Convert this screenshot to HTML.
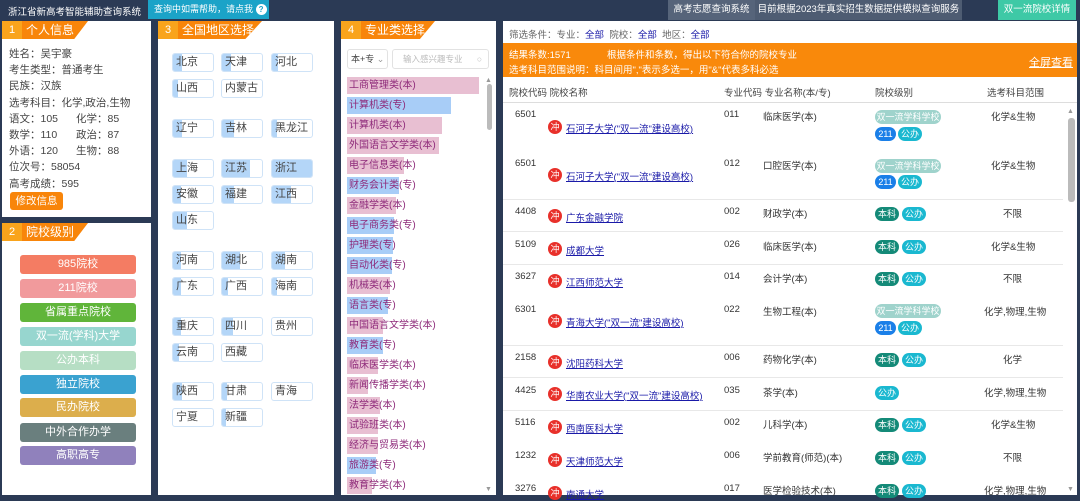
<!DOCTYPE html>
<html><head><meta charset="utf-8">
<style>
*{margin:0;padding:0;box-sizing:border-box}
body{width:1080px;height:495px;overflow:hidden;background:#2b3a55;font-family:"Liberation Sans","Noto Sans CJK SC",sans-serif;font-size:11px;color:#333;position:relative}
.a{position:absolute;white-space:nowrap}
.panel{position:absolute;background:#fff}
.tab{position:absolute;left:0;top:0;height:18px;width:86px;background:#f8850a;clip-path:polygon(0 0,100% 0,84% 100%,0 100%);color:#fff;font-size:12px;line-height:18px;padding-left:24px;white-space:nowrap}
.tab b{position:absolute;left:0;top:0;width:20px;height:18px;background:#f9a41c;font-weight:normal;text-align:center;font-size:11px}
.rg{position:absolute;width:42px;height:19px;border:1px solid #cfe3f7;border-radius:3px;background:#fff;font-size:11px;line-height:17px;color:#444;padding-left:3px;overflow:hidden;white-space:nowrap}
.rg i{position:absolute;left:0;top:0;bottom:0;background:#b4d6f8;z-index:0}
.rg span{position:relative}
.btn{position:absolute;left:18px;width:116px;height:19px;border-radius:3px;color:#fff;text-align:center;font-size:11px;line-height:19px}
.mj{position:absolute;left:347px;height:17px;font-size:10px;line-height:17px;color:#8e2a7a;padding-left:2px;white-space:nowrap}
.p{background:#e8bfd2}.b{background:#a8cdf7}
.t{position:absolute;height:14px;border-radius:7px;color:#fff;font-size:9px;line-height:14px;text-align:center;white-space:nowrap;overflow:hidden}
.c{position:absolute;left:548px;width:14px;height:14px;border-radius:7px;background:#e8302a;color:#fff;font-size:9px;line-height:14px;text-align:center}
.lk{position:absolute;left:566px;color:#1a1aa8;text-decoration:underline;font-size:9.5px;white-space:nowrap}
.sep{position:absolute;left:503px;width:560px;height:1px;background:#e8e8e8}
.r{font-size:9.5px}
</style></head><body>
<div class="a" style="left:8px;top:4px;color:#fff;font-size:9.5px">浙江省新高考智能辅助查询系统</div>
<div class="a" style="left:148px;top:0;width:121px;height:19px;background:#1ba3c8;color:#fff;font-size:9px;line-height:19px;padding-left:6px">查询中如需帮助，请点我 <span style="display:inline-block;width:11px;height:11px;border-radius:6px;background:#fff;color:#1ba3c8;font-size:8px;line-height:11px;text-align:center;font-weight:bold">?</span></div>
<div class="a" style="left:668px;top:0;width:87px;height:20px;background:#56647a;color:#fff;font-size:9.5px;line-height:20px;text-align:center">高考志愿查询系统</div>
<div class="a" style="left:755px;top:0;width:207px;height:20px;background:#4e5c72;color:#fff;font-size:9.5px;line-height:20px;text-align:center">目前根据2023年真实招生数据提供模拟查询服务</div>
<div class="a" style="left:998px;top:0;width:78px;height:20px;background:#3ec9a6;color:#fff;font-size:9.5px;line-height:20px;text-align:center">双一流院校详情</div>

<div class="panel" style="left:2px;top:21px;width:149px;height:196px">
<div class="tab"><b>1</b>个人信息</div>
<div style="position:absolute;left:7px;top:25px;font-size:10.5px;line-height:16.2px;color:#444">
姓名：吴宇豪<br>考生类型：普通考生<br>民族：汉族<br>选考科目：化学,政治,生物<br>
语文：105<span style="position:absolute;left:67px">化学：85</span><br>
数学：110<span style="position:absolute;left:67px">政治：87</span><br>
外语：120<span style="position:absolute;left:67px">生物：88</span><br>
位次号：58054<br>高考成绩：595</div>
<div class="a" style="left:8px;top:171px;width:53px;height:18px;background:#f8850a;border-radius:3px;color:#fff;font-size:10.5px;line-height:18px;text-align:center">修改信息</div>
</div>
<div class="panel" style="left:2px;top:223px;width:149px;height:272px">
<div class="tab"><b>2</b>院校级别</div>
<div class="btn" style="top:32px;background:#f47c63">985院校</div>
<div class="btn" style="top:56px;background:#f19a9c">211院校</div>
<div class="btn" style="top:80px;background:#60b53a">省属重点院校</div>
<div class="btn" style="top:104px;background:#97d6cf">双一流(学科)大学</div>
<div class="btn" style="top:128px;background:#b6dec4">公办本科</div>
<div class="btn" style="top:152px;background:#3aa2d0">独立院校</div>
<div class="btn" style="top:175px;background:#dcae4c">民办院校</div>
<div class="btn" style="top:200px;background:#6a7f7e">中外合作办学</div>
<div class="btn" style="top:223px;background:#9081bc">高职高专</div>
</div>

<div class="panel" style="left:158px;top:21px;width:176px;height:474px">
<div class="tab" style="width:104px"><b>3</b>全国地区选择</div>
</div>
<div class="rg" style="left:172px;top:53px"><i style="width:9px"></i><span>北京</span></div>
<div class="rg" style="left:221px;top:53px"><i style="width:9px"></i><span>天津</span></div>
<div class="rg" style="left:271px;top:53px"><i style="width:6px"></i><span>河北</span></div>
<div class="rg" style="left:172px;top:79px"><i style="width:5px"></i><span>山西</span></div>
<div class="rg" style="left:221px;top:79px"><span>内蒙古</span></div>
<div class="rg" style="left:172px;top:119px"><i style="width:9px"></i><span>辽宁</span></div>
<div class="rg" style="left:221px;top:119px"><i style="width:12px"></i><span>吉林</span></div>
<div class="rg" style="left:271px;top:119px"><i style="width:5px"></i><span>黑龙江</span></div>
<div class="rg" style="left:172px;top:159px"><i style="width:14px"></i><span>上海</span></div>
<div class="rg" style="left:221px;top:159px"><i style="width:28px"></i><span>江苏</span></div>
<div class="rg" style="left:271px;top:159px"><i style="width:42px"></i><span>浙江</span></div>
<div class="rg" style="left:172px;top:185px"><i style="width:8px"></i><span>安徽</span></div>
<div class="rg" style="left:221px;top:185px"><i style="width:12px"></i><span>福建</span></div>
<div class="rg" style="left:271px;top:185px"><i style="width:19px"></i><span>江西</span></div>
<div class="rg" style="left:172px;top:211px"><i style="width:14px"></i><span>山东</span></div>
<div class="rg" style="left:172px;top:251px"><i style="width:8px"></i><span>河南</span></div>
<div class="rg" style="left:221px;top:251px"><i style="width:18px"></i><span>湖北</span></div>
<div class="rg" style="left:271px;top:251px"><i style="width:13px"></i><span>湖南</span></div>
<div class="rg" style="left:172px;top:277px"><i style="width:8px"></i><span>广东</span></div>
<div class="rg" style="left:221px;top:277px"><i style="width:6px"></i><span>广西</span></div>
<div class="rg" style="left:271px;top:277px"><i style="width:5px"></i><span>海南</span></div>
<div class="rg" style="left:172px;top:317px"><i style="width:8px"></i><span>重庆</span></div>
<div class="rg" style="left:221px;top:317px"><i style="width:11px"></i><span>四川</span></div>
<div class="rg" style="left:271px;top:317px"><span>贵州</span></div>
<div class="rg" style="left:172px;top:343px"><i style="width:6px"></i><span>云南</span></div>
<div class="rg" style="left:221px;top:343px"><span>西藏</span></div>
<div class="rg" style="left:172px;top:382px"><i style="width:9px"></i><span>陕西</span></div>
<div class="rg" style="left:221px;top:382px"><i style="width:5px"></i><span>甘肃</span></div>
<div class="rg" style="left:271px;top:382px"><span>青海</span></div>
<div class="rg" style="left:172px;top:408px"><span>宁夏</span></div>
<div class="rg" style="left:221px;top:408px"><i style="width:4px"></i><span>新疆</span></div>

<div class="panel" style="left:341px;top:21px;width:155px;height:474px">
<div class="tab" style="width:94px"><b>4</b>专业类选择</div>
</div>
<div class="a" style="left:347px;top:49px;width:41px;height:20px;border:1px solid #e2e2e2;border-radius:3px;background:#fff;font-size:9px;line-height:18px;padding-left:3px;color:#444">本+专 <span style="color:#999">⌄</span></div>
<div class="a" style="left:392px;top:49px;width:97px;height:20px;border:1px solid #e2e2e2;border-radius:3px;background:#fff;font-size:8.5px;line-height:18px;padding-left:10px;color:#bbb">输入感兴趣专业 <span style="position:absolute;right:6px">○</span></div>
<div class="mj p" style="top:77px;width:132px">工商管理类(本)</div>
<div class="mj b" style="top:97px;width:104px">计算机类(专)</div>
<div class="mj p" style="top:117px;width:95px">计算机类(本)</div>
<div class="mj p" style="top:137px;width:92px">外国语言文学类(本)</div>
<div class="mj p" style="top:157px;width:57px">电子信息类(本)</div>
<div class="mj b" style="top:177px;width:52px">财务会计类(专)</div>
<div class="mj p" style="top:197px;width:49px">金融学类(本)</div>
<div class="mj b" style="top:217px;width:47px">电子商务类(专)</div>
<div class="mj b" style="top:237px;width:46px">护理类(专)</div>
<div class="mj b" style="top:257px;width:45px">自动化类(专)</div>
<div class="mj p" style="top:277px;width:43px">机械类(本)</div>
<div class="mj b" style="top:297px;width:41px">语言类(专)</div>
<div class="mj p" style="top:317px;width:36px">中国语言文学类(本)</div>
<div class="mj b" style="top:337px;width:36px">教育类(专)</div>
<div class="mj p" style="top:357px;width:31px">临床医学类(本)</div>
<div class="mj p" style="top:377px;width:21px">新闻传播学类(本)</div>
<div class="mj p" style="top:397px;width:33px">法学类(本)</div>
<div class="mj p" style="top:417px;width:31px">试验班类(本)</div>
<div class="mj p" style="top:437px;width:31px">经济与贸易类(本)</div>
<div class="mj b" style="top:457px;width:29px">旅游类(专)</div>
<div class="mj p" style="top:477px;width:25px">教育学类(本)</div>
<div class="a" style="left:487px;top:84px;width:5px;height:46px;background:#bbb;border-radius:3px"></div>
<div class="a" style="left:485px;top:77px;font-size:7px;color:#999">▲</div>
<div class="a" style="left:485px;top:486px;font-size:7px;color:#999">▼</div>

<div class="panel" style="left:503px;top:21px;width:574px;height:474px"></div>
<div class="a" style="left:509px;top:27px;font-size:9.5px;color:#666">筛选条件：专业：<span style="color:#1a1aa8">全部</span>&nbsp; 院校：<span style="color:#1a1aa8">全部</span>&nbsp; 地区：<span style="color:#1a1aa8">全部</span></div>
<div class="a" style="left:503px;top:43px;width:574px;height:34px;background:#f9890b"></div>
<div class="a" style="left:509px;top:47px;color:#fff;font-size:9.5px">结果条数:1571</div>
<div class="a" style="left:607px;top:47px;color:#fff;font-size:9.5px">根据条件和条数，得出以下符合你的院校专业</div>
<div class="a" style="left:509px;top:62px;color:#fff;font-size:9.5px">选考科目范围说明：科目间用","表示多选一，用"&amp;"代表多科必选</div>
<div class="a" style="left:1029px;top:54px;color:#fff;font-size:11px;text-decoration:underline">全屏查看</div>
<div class="a" style="left:509px;top:85px;font-size:9.5px;color:#444">院校代码 院校名称</div>
<div class="a" style="left:724px;top:85px;font-size:9.5px;color:#444">专业代码 专业名称(本/专)</div>
<div class="a" style="left:875px;top:85px;font-size:9.5px;color:#444">院校级别</div>
<div class="a" style="left:987px;top:85px;font-size:9.5px;color:#444">选考科目范围</div>
<div class="a" style="left:503px;top:102px;width:574px;height:1px;background:#ddd"></div>
<div class="a" style="left:1068px;top:118px;width:7px;height:84px;background:#bbb;border-radius:3px"></div>
<div class="a" style="left:1067px;top:108px;font-size:7px;color:#999">▲</div>
<div class="a" style="left:1067px;top:486px;font-size:7px;color:#999">▼</div>

<div class="a r" style="left:515px;top:109px">6501</div><div class="c" style="top:120px">冲</div><div class="lk" style="top:121px">石河子大学("双一流"建设高校)</div>
<div class="a r" style="left:724px;top:109px">011</div><div class="a r" style="left:763px;top:109px">临床医学(本)</div>
<div class="t" style="left:875px;top:110px;width:66px;background:#9fd3cc">双一流学科学校</div><div class="t" style="left:875px;top:127px;width:21px;background:#1a7fe8">211</div><div class="t" style="left:898px;top:127px;width:24px;background:#1ab8d0">公办</div>
<div class="a r" style="left:991px;top:109px">化学&amp;生物</div>

<div class="a r" style="left:515px;top:158px">6501</div><div class="c" style="top:168px">冲</div><div class="lk" style="top:169px">石河子大学("双一流"建设高校)</div>
<div class="a r" style="left:724px;top:158px">012</div><div class="a r" style="left:763px;top:158px">口腔医学(本)</div>
<div class="t" style="left:875px;top:159px;width:66px;background:#9fd3cc">双一流学科学校</div><div class="t" style="left:875px;top:175px;width:21px;background:#1a7fe8">211</div><div class="t" style="left:898px;top:175px;width:24px;background:#1ab8d0">公办</div>
<div class="a r" style="left:991px;top:158px">化学&amp;生物</div>
<div class="sep" style="top:199px"></div>

<div class="a r" style="left:515px;top:206px">4408</div><div class="c" style="top:209px">冲</div><div class="lk" style="top:210px">广东金融学院</div>
<div class="a r" style="left:724px;top:206px">002</div><div class="a r" style="left:763px;top:206px">财政学(本)</div>
<div class="t" style="left:875px;top:207px;width:24px;background:#148a78">本科</div><div class="t" style="left:902px;top:207px;width:24px;background:#1ab8d0">公办</div>
<div class="a r" style="left:1003px;top:206px">不限</div>
<div class="sep" style="top:231px"></div>

<div class="a r" style="left:515px;top:239px">5109</div><div class="c" style="top:242px">冲</div><div class="lk" style="top:243px">成都大学</div>
<div class="a r" style="left:724px;top:239px">026</div><div class="a r" style="left:763px;top:239px">临床医学(本)</div>
<div class="t" style="left:875px;top:240px;width:24px;background:#148a78">本科</div><div class="t" style="left:902px;top:240px;width:24px;background:#1ab8d0">公办</div>
<div class="a r" style="left:991px;top:239px">化学&amp;生物</div>
<div class="sep" style="top:264px"></div>

<div class="a r" style="left:515px;top:271px">3627</div><div class="c" style="top:274px">冲</div><div class="lk" style="top:275px">江西师范大学</div>
<div class="a r" style="left:724px;top:271px">014</div><div class="a r" style="left:763px;top:271px">会计学(本)</div>
<div class="t" style="left:875px;top:272px;width:24px;background:#148a78">本科</div><div class="t" style="left:902px;top:272px;width:24px;background:#1ab8d0">公办</div>
<div class="a r" style="left:1003px;top:271px">不限</div>

<div class="a r" style="left:515px;top:304px">6301</div><div class="c" style="top:314px">冲</div><div class="lk" style="top:315px">青海大学("双一流"建设高校)</div>
<div class="a r" style="left:724px;top:304px">022</div><div class="a r" style="left:763px;top:304px">生物工程(本)</div>
<div class="t" style="left:875px;top:304px;width:66px;background:#9fd3cc">双一流学科学校</div><div class="t" style="left:875px;top:321px;width:21px;background:#1a7fe8">211</div><div class="t" style="left:898px;top:321px;width:24px;background:#1ab8d0">公办</div>
<div class="a r" style="left:984px;top:304px">化学,物理,生物</div>
<div class="sep" style="top:345px"></div>

<div class="a r" style="left:515px;top:352px">2158</div><div class="c" style="top:355px">冲</div><div class="lk" style="top:356px">沈阳药科大学</div>
<div class="a r" style="left:724px;top:352px">006</div><div class="a r" style="left:763px;top:352px">药物化学(本)</div>
<div class="t" style="left:875px;top:353px;width:24px;background:#148a78">本科</div><div class="t" style="left:902px;top:353px;width:24px;background:#1ab8d0">公办</div>
<div class="a r" style="left:1003px;top:352px">化学</div>
<div class="sep" style="top:377px"></div>

<div class="a r" style="left:515px;top:385px">4425</div><div class="c" style="top:387px">冲</div><div class="lk" style="top:388px">华南农业大学("双一流"建设高校)</div>
<div class="a r" style="left:724px;top:385px">035</div><div class="a r" style="left:763px;top:385px">茶学(本)</div>
<div class="t" style="left:875px;top:386px;width:24px;background:#1ab8d0">公办</div>
<div class="a r" style="left:984px;top:385px">化学,物理,生物</div>
<div class="sep" style="top:410px"></div>

<div class="a r" style="left:515px;top:417px">5116</div><div class="c" style="top:420px">冲</div><div class="lk" style="top:421px">西南医科大学</div>
<div class="a r" style="left:724px;top:417px">002</div><div class="a r" style="left:763px;top:417px">儿科学(本)</div>
<div class="t" style="left:875px;top:418px;width:24px;background:#148a78">本科</div><div class="t" style="left:902px;top:418px;width:24px;background:#1ab8d0">公办</div>
<div class="a r" style="left:991px;top:417px">化学&amp;生物</div>

<div class="a r" style="left:515px;top:450px">1232</div><div class="c" style="top:453px">冲</div><div class="lk" style="top:454px">天津师范大学</div>
<div class="a r" style="left:724px;top:450px">006</div><div class="a r" style="left:763px;top:450px">学前教育(师范)(本)</div>
<div class="t" style="left:875px;top:451px;width:24px;background:#148a78">本科</div><div class="t" style="left:902px;top:451px;width:24px;background:#1ab8d0">公办</div>
<div class="a r" style="left:1003px;top:450px">不限</div>

<div class="a r" style="left:515px;top:483px">3276</div><div class="c" style="top:486px">冲</div><div class="lk" style="top:487px">南通大学</div>
<div class="a r" style="left:724px;top:483px">017</div><div class="a r" style="left:763px;top:483px">医学检验技术(本)</div>
<div class="t" style="left:875px;top:484px;width:24px;background:#148a78">本科</div><div class="t" style="left:902px;top:484px;width:24px;background:#1ab8d0">公办</div>
<div class="a r" style="left:984px;top:483px">化学,物理,生物</div>
</body></html>
